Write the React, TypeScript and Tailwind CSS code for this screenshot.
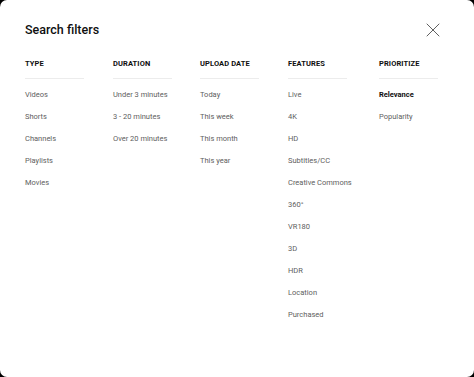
import { X } from 'lucide-react';

type Column = {
    title: string;
    width: string;
    items: { label: string; active?: boolean }[];
};

const COLUMNS: Column[] = [
    {
        title: 'Type',
        width: 'w-[88px]',
        items: [{ label: 'Videos' }, { label: 'Shorts' }, { label: 'Channels' }, { label: 'Playlists' }, { label: 'Movies' }],
    },
    {
        title: 'Duration',
        width: 'w-[87px]',
        items: [{ label: 'Under 3 minutes' }, { label: '3 - 20 minutes' }, { label: 'Over 20 minutes' }],
    },
    {
        title: 'Upload date',
        width: 'w-[88px]',
        items: [{ label: 'Today' }, { label: 'This week' }, { label: 'This month' }, { label: 'This year' }],
    },
    {
        title: 'Features',
        width: 'w-[91px]',
        items: [
            { label: 'Live' }, { label: '4K' }, { label: 'HD' }, { label: 'Subtitles/CC' },
            { label: 'Creative Commons' }, { label: '360°' }, { label: 'VR180' }, { label: '3D' },
            { label: 'HDR' }, { label: 'Location' }, { label: 'Purchased' },
        ],
    },
    {
        title: 'Prioritize',
        width: 'w-[70px]',
        items: [{ label: 'Relevance', active: true }, { label: 'Popularity' }],
    },
];

export default function App() {
    return (
        <div className="w-[474px] h-[377px] bg-black font-['Roboto','Liberation_Sans',sans-serif]">
            <div className="w-full h-full bg-white rounded-[7px] pl-[25px] pr-[24px] pt-[22px]">
                {/* header */}
                <div className="flex items-center justify-between h-[16px]">
                    <h2 className="text-[12.5px] font-medium text-[#0f0f0f] leading-none">Search filters</h2>
                    <X className="w-[24px] h-[24px] shrink-0 text-[#606060] mr-[5px]" strokeWidth={1} />
                </div>

                {/* columns */}
                <div className="flex mt-[21px]">
                    {COLUMNS.map((col) => (
                        <div key={col.title} className={`${col.width} shrink-0`}>
                            <div className="text-[7.5px] font-bold uppercase text-[#0f0f0f] leading-[10px] tracking-[0.1px]">
                                {col.title}
                            </div>
                            <div className="w-[59px] h-px bg-[#ececec] mt-[9px] mb-[11px]" />
                            <div className="flex flex-col">
                                {col.items.map((item) => (
                                    <div
                                        key={item.label}
                                        className={`h-[22px] text-[7.5px] leading-[10px] ${item.active ? 'font-bold text-[#0f0f0f]' : 'text-[#606060]'}`}
                                    >
                                        {item.label}
                                    </div>
                                ))}
                            </div>
                        </div>
                    ))}
                </div>
            </div>
        </div>
    );
}
